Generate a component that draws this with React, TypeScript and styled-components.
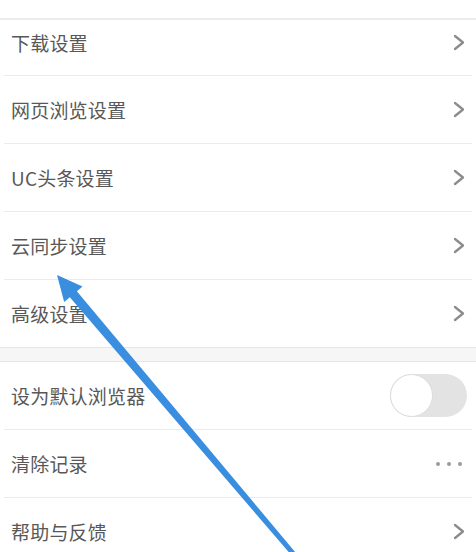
import styled, { createGlobalStyle } from "styled-components";

const GlobalStyle = createGlobalStyle`
  html, body {
    margin: 0;
    padding: 0;
    background: #ffffff;
  }
  body {
    font-family: "Noto Sans CJK SC", "Noto Sans", sans-serif;
  }
`;

type RowKind = "chevron" | "toggle" | "dots";

const groups: { label: string; kind: RowKind }[][] = [
    [
        { label: "下载设置", kind: "chevron" },
        { label: "网页浏览设置", kind: "chevron" },
        { label: "UC头条设置", kind: "chevron" },
        { label: "云同步设置", kind: "chevron" },
        { label: "高级设置", kind: "chevron" }
    ],
    [
        { label: "设为默认浏览器", kind: "toggle" },
        { label: "清除记录", kind: "dots" },
        { label: "帮助与反馈", kind: "chevron" }
    ]
];

function Chevron() {
    return (
        <ChevronIcon width="12" height="17" viewBox="0 0 12 17">
            <path
                d="M2 2 L10 8.5 L2 15"
                fill="none"
                stroke="#8c8c8c"
                strokeWidth="2.3"
                strokeLinecap="round"
                strokeLinejoin="round"
            />
        </ChevronIcon>
    );
}

function Arrow() {
    return (
        <Overlay width="476" height="552" viewBox="0 0 476 552">
            <polygon
                points="66.4,293.3 73.5,287.3 298.2,555.7 294.6,558.9"
                fill="#3a8ee0"
            />
            <polygon points="57,275 82.5,286.5 64.2,302" fill="#3a8ee0" />
        </Overlay>
    );
}

export default function App() {
    return (
        <>
            <GlobalStyle />
            <Page>
                <TopStrip />
                {groups.map((rows, gi) => (
                    <div key={gi}>
                        {gi > 0 && <Band />}
                        {rows.map((row, ri) => (
                            <div key={row.label}>
                                {ri > 0 && <Divider />}
                                <Row $compact={gi === 0 && ri === 0}>
                                    <Label>{row.label}</Label>
                                    {row.kind === "chevron" && <Chevron />}
                                    {row.kind === "toggle" && (
                                        <Toggle>
                                            <Knob />
                                        </Toggle>
                                    )}
                                    {row.kind === "dots" && (
                                        <Dots>
                                            <Dot />
                                            <Dot />
                                            <Dot />
                                        </Dots>
                                    )}
                                </Row>
                            </div>
                        ))}
                    </div>
                ))}
                <Arrow />
            </Page>
        </>
    );
}

const Page = styled.div`
  position: relative;
  width: 476px;
  height: 552px;
  overflow: hidden;
  background: #ffffff;
`;

const TopStrip = styled.div`
  height: 18px;
  border-bottom: 2px solid #ececec;
`;

const Band = styled.div`
  height: 13px;
  background: #f6f6f6;
  border-top: 1px solid #e6e6e6;
  border-bottom: 1px solid #e6e6e6;
`;

const Divider = styled.div`
  height: 1px;
  margin: 0 4px;
  background: #ebebeb;
`;

const Row = styled.div<{ $compact?: boolean }>`
  box-sizing: border-box;
  height: ${(p) => (p.$compact ? "55px" : "67px")};
  padding: 0 11px ${(p) => (p.$compact ? "11px" : "0")} 11px;
  display: flex;
  align-items: center;
  justify-content: space-between;
`;

const Label = styled.span`
  font-size: 19px;
  line-height: 1;
  color: #585858;
  letter-spacing: 0.2px;
`;

const ChevronIcon = styled.svg`
  display: block;
  flex-shrink: 0;
`;

const Toggle = styled.div`
  width: 77px;
  height: 43px;
  margin-right: -2px;
  border-radius: 22px;
  background: #e3e3e3;
  display: flex;
  align-items: center;
`;

const Knob = styled.div`
  box-sizing: border-box;
  width: 43px;
  height: 43px;
  border-radius: 50%;
  background: #ffffff;
  border: 1px solid #dcdcdc;
`;

const Dots = styled.div`
  display: flex;
  gap: 7px;
  margin-right: 3px;
`;

const Dot = styled.span`
  width: 4px;
  height: 4px;
  border-radius: 50%;
  background: #9a9a9a;
`;

const Overlay = styled.svg`
  position: absolute;
  left: 0;
  top: 0;
  pointer-events: none;
`;
